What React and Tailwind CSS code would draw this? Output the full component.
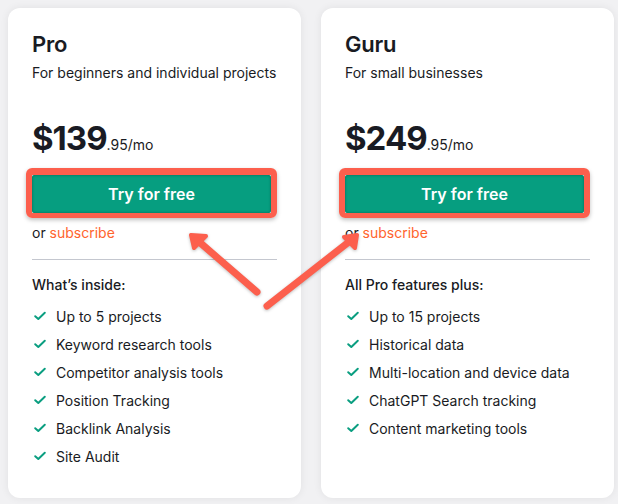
import React from 'react'

const plans = [
  {
    name: 'Pro',
    desc: 'For beginners and individual projects',
    price: '$139',
    cents: '.95/mo',
    heading: 'What’s inside:',
    features: [
      'Up to 5 projects',
      'Keyword research tools',
      'Competitor analysis tools',
      'Position Tracking',
      'Backlink Analysis',
      'Site Audit',
    ],
  },
  {
    name: 'Guru',
    desc: 'For small businesses',
    price: '$249',
    cents: '.95/mo',
    heading: 'All Pro features plus:',
    features: [
      'Up to 15 projects',
      'Historical data',
      'Multi-location and device data',
      'ChatGPT Search tracking',
      'Content marketing tools',
    ],
  },
]

function Check(){
  return (
    <svg width="16" height="16" viewBox="0 0 16 16" className="shrink-0">
      <path d="M3.2 8.2 L6.3 11 L12.8 4.8" fill="none" stroke="#0a9e80" strokeWidth="2" strokeLinecap="round" strokeLinejoin="round" />
    </svg>
  )
}

function Card({ plan }){
  return (
    <div className="w-[293px] h-[490px] shrink-0 bg-white rounded-xl shadow-[0_0_8px_rgba(0,0,0,0.07)] px-6 pt-[22px] text-[#191b23]">
      <h2 className="text-[22px] leading-[28px] font-semibold tracking-[-0.01em]">{plan.name}</h2>
      <p className="mt-[5px] text-[14px] leading-[20px]">{plan.desc}</p>

      <div className="mt-[35px] h-[40px] flex items-baseline">
        <span className="text-[33px] leading-[40px] font-bold tracking-[-0.03em]">{plan.price}</span>
        <span className="text-[14px] leading-[20px]">{plan.cents}</span>
      </div>

      {/* annotation box round the button */}
      <div className="mt-[10px] -ml-[6px] w-[251px] border-[6px] border-t-[7px] border-b-[5px] border-[#fc5f4d] rounded-[6px] shadow-[0_2px_4px_rgba(0,0,0,0.25)]">
        <button className="w-full h-[38px] bg-[#069e80] rounded-[2px] text-white text-[16px] font-semibold shadow-[inset_0_0_3px_rgba(0,0,0,0.35)]">
          Try for free
        </button>
      </div>

      <p className="mt-[5px] text-[14px] leading-[20px]">
        or <span className="text-[#ff642d]">subscribe</span>
      </p>

      <div className="mt-[16px] h-px bg-[#c4c7cf]" />

      <p className="mt-[15px] text-[14px] leading-[20px] font-medium">{plan.heading}</p>

      <ul className="mt-[7px]">
        {plan.features.map(f => (
          <li key={f} className="h-7 flex items-center gap-2 text-[14px]">
            <Check />
            <span>{f}</span>
          </li>
        ))}
      </ul>
    </div>
  )
}

export default function App(){
  return (
    <div className="relative w-[618px] h-[504px] overflow-hidden bg-[#f1f1f3] flex gap-5 pl-2 pt-2" style={{ fontFamily: 'Inter, "Noto Sans", sans-serif' }}>
      {plans.map(p => <Card key={p.name} plan={p} />)}

      <svg className="absolute inset-0 pointer-events-none" width="618" height="504" viewBox="0 0 618 504" style={{ filter: 'drop-shadow(0 1px 1.5px rgba(0,0,0,0.25))' }}>
        <g stroke="#fc5f4d" fill="#fc5f4d" strokeLinecap="round" strokeLinejoin="round">
          <line x1="257" y1="292" x2="197" y2="240" strokeWidth="7" />
          <polygon points="191,235 206,236 194,248" strokeWidth="4" />
          <line x1="267" y1="306" x2="350" y2="241" strokeWidth="7" />
          <polygon points="357,235 344,237 355,248" strokeWidth="4" />
        </g>
      </svg>
    </div>
  )
}
